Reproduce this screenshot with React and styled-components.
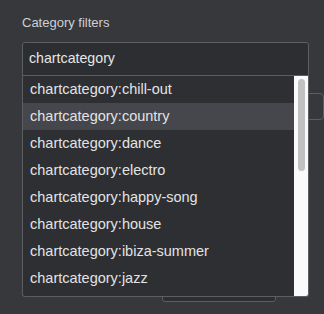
import React from "react";
import styled, { createGlobalStyle } from "styled-components";

const GlobalStyle = createGlobalStyle`
  html, body {
    margin: 0;
    padding: 0;
    background: #36383c;
    font-family: "Liberation Sans", Arial, sans-serif;
  }
`;

const Page = styled.div`
  width: 324px;
  height: 314px;
  padding: 15px 0 0 22px;
  box-sizing: border-box;
  overflow: hidden;
`;

const Label = styled.div`
  font-size: 13px;
  line-height: 15px;
  color: #cfd0d2;
  margin-bottom: 12px;
`;

const Field = styled.div`
  position: relative;
  width: 287px;
  z-index: 2;
`;

const Input = styled.input`
  box-sizing: border-box;
  width: 100%;
  height: 34px;
  padding: 0 6px 2px;
  border: 1px solid #5c5e62;
  border-radius: 3px 3px 0 0;
  background: #2c2e32;
  color: #e6e6e6;
  font-family: inherit;
  font-size: 14.2px;
  outline: none;
`;

const Dropdown = styled.div`
  position: absolute;
  top: 100%;
  left: 0;
  right: 0;
  height: 221px;
  display: flex;
  box-sizing: border-box;
  border: 1px solid #5c5e62;
  border-top: none;
  border-radius: 0 0 3px 3px;
  background: #2d2f33;
  overflow: hidden;
`;

const List = styled.ul`
  flex: 1;
  margin: 0;
  padding: 0;
  list-style: none;
`;

const Option = styled.li`
  height: 27px;
  line-height: 27px;
  padding-left: 7px;
  font-size: 14.5px;
  color: #e3e3e3;
  white-space: nowrap;
  background: ${(p) => (p.$active ? "#45474c" : "transparent")};
`;

const Track = styled.div`
  width: 14px;
  flex-shrink: 0;
  background: #fafafa;
  padding: 3px 3px 0 4px;
  box-sizing: border-box;
`;

const Thumb = styled.div`
  height: 92px;
  border-radius: 4px;
  background: #c1c1c1;
`;

const Behind = styled.div`
  display: flex;
  align-items: flex-start;
  padding-left: 140px;
  margin-top: 10px;
`;

const Panel = styled.div`
  width: 146px;
  height: 216px;
  box-sizing: border-box;
  border: 1px solid #5c5e62;
  border-radius: 3px;
  background: #2c2e32;
`;

const Button = styled.div`
  margin: 7px 0 0 8px;
  width: 40px;
  height: 27px;
  flex-shrink: 0;
  box-sizing: border-box;
  border: 1px solid #5c5e62;
  border-radius: 4px;
  background: #36383c;
`;

const categories = [
  "chill-out",
  "country",
  "dance",
  "electro",
  "happy-song",
  "house",
  "ibiza-summer",
  "jazz",
];

export default function App() {
  return (
    <>
      <GlobalStyle />
      <Page>
        <Label>Category filters</Label>
        <Field>
          <Input defaultValue="chartcategory" />
          <Dropdown>
            <List>
              {categories.map((c) => (
                <Option key={c} $active={c === "country"}>
                  chartcategory:{c}
                </Option>
              ))}
            </List>
            <Track>
              <Thumb />
            </Track>
          </Dropdown>
        </Field>
        <Behind>
          <Panel />
          <Button />
        </Behind>
      </Page>
    </>
  );
}
